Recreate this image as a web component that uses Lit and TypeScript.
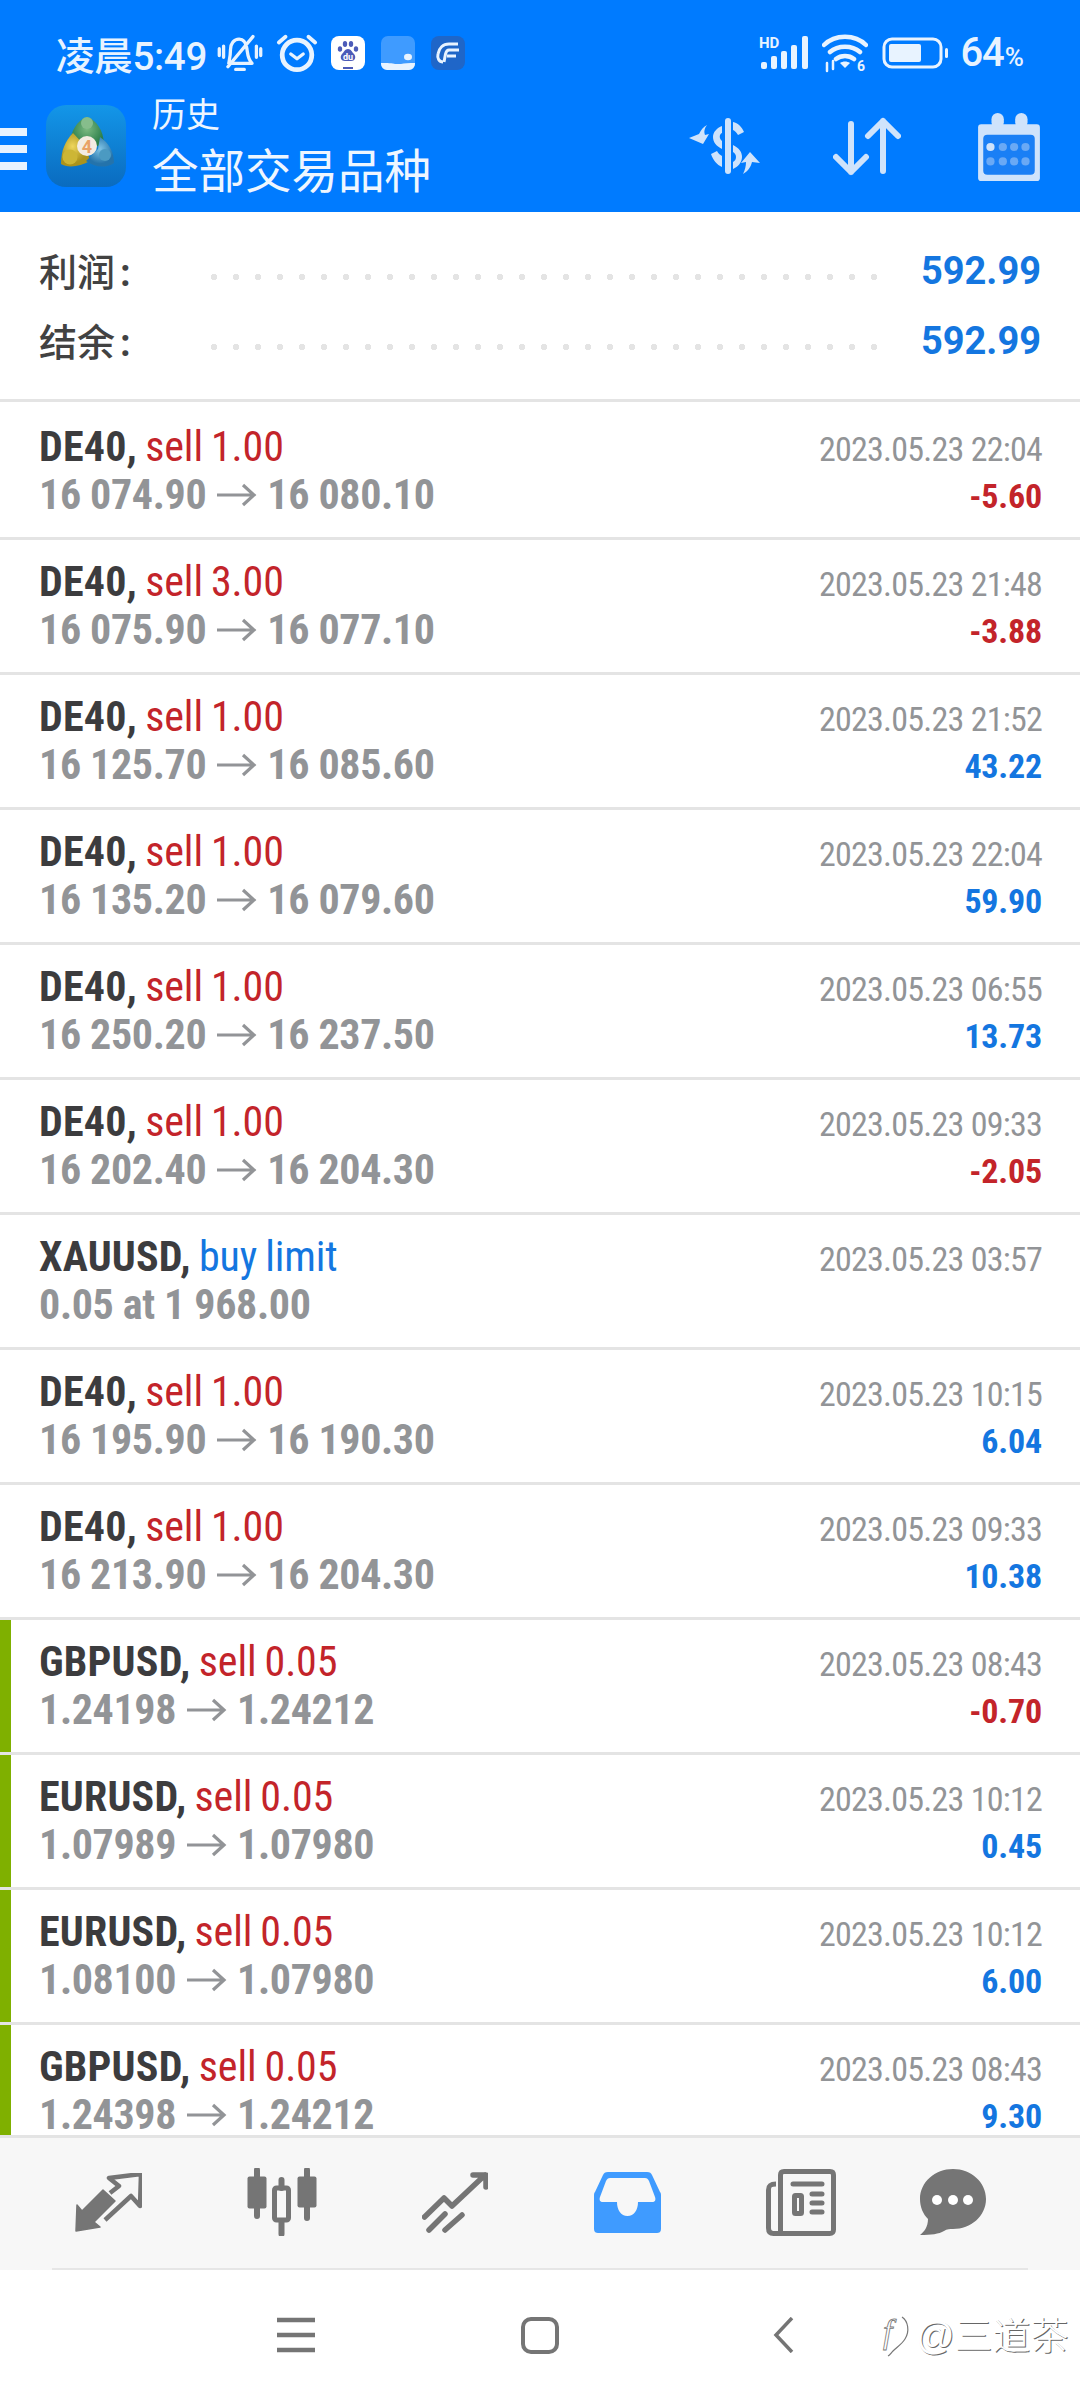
import { LitElement, css, html, svg } from 'lit'
import { customElement } from 'lit/decorators.js'

type Deal = {
  sym: string
  act: string
  buy?: boolean
  line: string
  arrow?: string
  time: string
  pl?: string
  mark?: boolean
}

const deals: Deal[] = [
  { sym: 'DE40', act: 'sell 1.00', line: '16 074.90', arrow: '16 080.10', time: '2023.05.23 22:04', pl: '-5.60' },
  { sym: 'DE40', act: 'sell 3.00', line: '16 075.90', arrow: '16 077.10', time: '2023.05.23 21:48', pl: '-3.88' },
  { sym: 'DE40', act: 'sell 1.00', line: '16 125.70', arrow: '16 085.60', time: '2023.05.23 21:52', pl: '43.22' },
  { sym: 'DE40', act: 'sell 1.00', line: '16 135.20', arrow: '16 079.60', time: '2023.05.23 22:04', pl: '59.90' },
  { sym: 'DE40', act: 'sell 1.00', line: '16 250.20', arrow: '16 237.50', time: '2023.05.23 06:55', pl: '13.73' },
  { sym: 'DE40', act: 'sell 1.00', line: '16 202.40', arrow: '16 204.30', time: '2023.05.23 09:33', pl: '-2.05' },
  { sym: 'XAUUSD', act: 'buy limit', buy: true, line: '0.05 at 1 968.00', time: '2023.05.23 03:57' },
  { sym: 'DE40', act: 'sell 1.00', line: '16 195.90', arrow: '16 190.30', time: '2023.05.23 10:15', pl: '6.04' },
  { sym: 'DE40', act: 'sell 1.00', line: '16 213.90', arrow: '16 204.30', time: '2023.05.23 09:33', pl: '10.38' },
  { sym: 'GBPUSD', act: 'sell 0.05', line: '1.24198', arrow: '1.24212', time: '2023.05.23 08:43', pl: '-0.70', mark: true },
  { sym: 'EURUSD', act: 'sell 0.05', line: '1.07989', arrow: '1.07980', time: '2023.05.23 10:12', pl: '0.45', mark: true },
  { sym: 'EURUSD', act: 'sell 0.05', line: '1.08100', arrow: '1.07980', time: '2023.05.23 10:12', pl: '6.00', mark: true },
  { sym: 'GBPUSD', act: 'sell 0.05', line: '1.24398', arrow: '1.24212', time: '2023.05.23 08:43', pl: '9.30', mark: true },
]

const arrowIcon = svg`<svg class="arr" width="41" height="24" viewBox="0 0 41 24" fill="none" stroke="#929497" stroke-width="3.2"><path d="M1 12H38M27 2l11 10-11 10"/></svg>`

@customElement('app-root')
export class AppRoot extends LitElement {
  static styles = css`
    :host {
      display: flex;
      flex-direction: column;
      width: 1080px;
      height: 2400px;
      background: #fff;
      position: relative;
      overflow: hidden;
      font-family: Roboto, "Noto Sans CJK SC", sans-serif;
    }
    svg { display: block; flex: none; }

    .head { height: 212px; background: #007bff; color: #e8f3ff; flex: none; }
    .status { height: 92px; display: flex; align-items: center; padding: 13px 0 0 56px; box-sizing: border-box; }
    .clock { font-size: 38.5px; font-weight: 500; width: 161px; white-space: nowrap; letter-spacing: -0.3px; }
    .st-icons { display: flex; align-items: center; }
    .st-icons .alarm { margin-left: 13px; }
    .st-icons .app { margin-left: 16px; }
    .st-icons .alarm + .app { margin-left: 13px; }
    .st-right { margin-left: auto; display: flex; align-items: center; padding-right: 56px; }
    .st-right .sig { margin-top: -3px; }
    .st-right .wifi { margin-left: 13px; margin-top: 4px; }
    .st-right .batt { margin-left: 14px; }
    .batt-txt { font-size: 40px; font-weight: 500; margin-left: 12px; letter-spacing: -1px; }
    .batt-txt small { font-size: 26px; font-weight: 500; letter-spacing: 0; margin-left: 1px; }

    .bar { height: 120px; display: flex; align-items: center; }
    .burger { width: 27px; margin-right: 19px; display: flex; flex-direction: column; gap: 9px; margin-top: -6px; }
    .burger i { display: block; height: 8px; background: #e8f3ff; }
    .logo { margin-top: -12px; }
    .titles { margin-left: 26px; margin-top: -10px; color: #eef6ff; }
    .t1 { font-size: 34px; line-height: 42px; }
    .t2 { font-size: 46.5px; line-height: 56px; margin-top: 8px; }
    .actions { margin-left: auto; display: flex; align-items: center; padding-right: 39px; margin-top: -10px; }
    .actions .arrows { margin-left: 72px; }
    .actions .cal { margin-left: 76px; }

    .summary { height: 187px; flex: none; box-sizing: border-box; padding-top: 22px; }
    .sum-row { height: 70px; display: flex; align-items: center; padding: 0 39px; }
    .sum-label { width: 172px; font-size: 38px; color: #424242; white-space: nowrap; font-weight: 500; }
    .colon { margin-left: 5px; font-weight: 700; }
    .dots { flex: 1; height: 6px; margin-top: 16px; background: radial-gradient(circle at 3px 3px, #e4e4e4 3px, transparent 3.4px) 0 0 / 22px 6px repeat-x; margin-right: 40px; }
    .sum-val { font-size: 38px; font-weight: 700; color: #1476e0; margin-top: 4px; }

    .list { flex: 1; min-height: 0; overflow: hidden; border-top: 3px solid #e4e4e4; padding-top: 3px; }
    .row { height: 132px; border-bottom: 3px solid #e4e4e4; position: relative; display: flex; justify-content: space-between; padding: 0 38px 0 39px; }
    .row.mark::before { content: ''; position: absolute; left: 0; top: 0; bottom: 0; width: 11px; background: #7fb000; }
    .left, .right { display: flex; flex-direction: column; padding-top: 18px; white-space: nowrap; font-stretch: 75%; }
    .l1 { font-size: 42px; line-height: 48px; color: #c3242a; word-spacing: -1.5px; }
    .l1 b { color: #3c3c3e; font-weight: 700; letter-spacing: 0.2px; }
    .l1 span { letter-spacing: -0.1px; }
    .l1 .buy { color: #1476e0; }
    .l2 { font-size: 42px; line-height: 45px; margin-top: 1px; color: #929497; font-weight: 700; display: flex; align-items: center; gap: 10px; letter-spacing: -0.35px; }
    .right { align-items: flex-end; padding-top: 21px; }
    .time { font-size: 34px; line-height: 47px; color: #929497; letter-spacing: -0.75px; }
    .pl { font-size: 34px; line-height: 41px; margin-top: 3px; font-weight: 700; color: #1476e0; letter-spacing: -0.2px; }
    .pl.neg { color: #c3242a; }

    .tabs { height: 135px; flex: none; background: #f7f7f7; position: relative; display: grid; grid-template-columns: repeat(5, 173px) 132px; padding-left: 22px; border-top: 3px solid #e4e4e4; box-sizing: border-box; }
    .tabs::after { content: ''; position: absolute; left: 52px; right: 52px; bottom: 0; height: 2px; background: #e6e6e6; }
    .tab { display: flex; align-items: center; justify-content: center; margin-top: -4px; }

    .nav { height: 130px; flex: none; background: #fff; position: relative; display: flex; padding: 47px 0 0 277px; box-sizing: border-box; align-items: flex-start; }
    .nav .home { margin-left: 206px; }
    .nav .back { margin-left: 214px; }
    .wm { position: absolute; left: 878px; top: 43px; display: flex; align-items: center; gap: 5px; }
    .wm span { font-size: 38px; line-height: 46px; color: #fff; text-shadow: 1px 1px 0 #666; white-space: nowrap; font-family: "Liberation Sans", "Noto Sans CJK SC", sans-serif; font-weight: 300; }
  `

  private bell() {
    return html`<svg width="46" height="38" viewBox="0 0 52 44" fill="none" stroke="#e8f3ff" stroke-width="3.8" stroke-linecap="round" stroke-linejoin="round">
      <path d="M13 34h27c-5-5-5-10-6-17-1-7-4-11-9-11-6 0-10 5-10 12 0 7-1 11-2 16zM21 41h10M41 3 12 38M2 17v8M7 14v13M45 14v13M50 17v8"/>
    </svg>`
  }

  private alarm() {
    return html`<svg class="alarm" width="42" height="42" viewBox="0 0 44 44" fill="none" stroke="#e8f3ff" stroke-linecap="round" stroke-linejoin="round">
      <circle cx="22" cy="24" r="15.5" stroke-width="5"/>
      <path d="M15.5 23l6.5 5 6.5-5" stroke-width="3.5"/>
      <path d="M3 11l7-6M41 11l-7-6" stroke-width="4"/>
    </svg>`
  }

  private baidu() {
    return html`<svg class="app" width="34" height="34" viewBox="0 0 34 34">
      <rect width="34" height="34" rx="8" fill="#fff"/>
      <g fill="#4c5bb8"><ellipse cx="9" cy="13" rx="2.2" ry="2.8"/><ellipse cx="14" cy="8" rx="2.2" ry="3"/><ellipse cx="20" cy="8" rx="2.2" ry="3"/><ellipse cx="25" cy="13" rx="2.2" ry="2.8"/>
      <path d="M17 13c3 0 4 3 6 5s2 7-3 7H14c-5 0-5-5-3-7s3-5 6-5z"/><rect x="12" y="31" width="10" height="2"/></g>
      <text x="17" y="24" text-anchor="middle" font-family="Roboto" font-size="9" font-weight="700" fill="#fff">du</text>
    </svg>`
  }

  private chatApp() {
    return html`<svg class="app" width="34" height="34" viewBox="0 0 34 34">
      <rect width="34" height="34" rx="7" fill="#3f9bff"/>
      <path d="M0 27c6 0 12 0 14 1h6c3-1 8-1 14-1v1a6 6 0 0 1-6 6H6a6 6 0 0 1-6-6z" fill="#e8f3ff"/>
      <ellipse cx="27" cy="21" rx="4" ry="3.2" fill="#e8f3ff"/>
    </svg>`
  }

  private flyApp() {
    return html`<svg class="app" width="34" height="34" viewBox="0 0 34 34" fill="none">
      <rect width="34" height="34" rx="8" fill="#1f66c8"/>
      <path d="M27 8H18C12 8 8 12 7 18c-1 4 1 8 5 8" stroke="#e8f3ff" stroke-width="3"/>
      <path d="M28 14H18c-2 0-3 2-3.500 4L13 26M25 20h-9" stroke="#e8f3ff" stroke-width="3"/>
    </svg>`
  }

  private signal() {
    return html`<svg class="sig" width="50" height="37" viewBox="0 -3 50 37">
      <text x="0" y="12" font-family="Roboto" font-size="15" font-weight="700" fill="#e8f3ff">HD</text>
      <g fill="#e8f3ff"><rect x="2" y="26" width="6" height="7" rx="2"/><rect x="12" y="20" width="6" height="13" rx="2"/><rect x="22" y="15" width="6" height="18" rx="2"/><rect x="32" y="9" width="6" height="24" rx="2"/><rect x="43" y="0" width="6" height="33" rx="2"/></g>
    </svg>`
  }

  private wifi() {
    return html`<svg class="wifi" width="46" height="42" viewBox="0 0 46 42" fill="none" stroke="#e8f3ff" stroke-width="4.500" stroke-linecap="round">
      <path d="M2 11C13 0 33 0 44 11M8 18c8-7 22-7 30 0M14 25c5-4 13-4 18 0"/>
      <path d="M23 34l-5-5c3-2 7-2 10 0z" fill="#e8f3ff" stroke="none"/>
      <path d="M5 29v8M11 27v8" stroke-width="2.500"/>
      <text x="35" y="37" font-family="Roboto" font-size="14" font-weight="700" fill="#e8f3ff" stroke="none">6</text>
    </svg>`
  }

  private battery() {
    return html`<svg class="batt" width="66" height="32" viewBox="0 0 66 32" fill="none">
      <rect x="2" y="2" width="57" height="28" rx="8" stroke="#e8f3ff" stroke-width="3"/>
      <rect x="7" y="7" width="32" height="18" rx="2" fill="#e8f3ff"/>
      <rect x="63" y="11" width="3" height="10" rx="1.500" fill="#e8f3ff"/>
    </svg>`
  }

  private logo() {
    return html`<svg class="logo" width="80" height="82" viewBox="0 0 80 82">
      <defs>
        <linearGradient id="lg" x1="0" y1="0" x2="0" y2="1"><stop offset="0" stop-color="#1396e8"/><stop offset="1" stop-color="#0a6bbf"/></linearGradient>
        <radialGradient id="gr" cx=".5" cy=".35"><stop offset="0" stop-color="#7cba82"/><stop offset="1" stop-color="#2c7f4b"/></radialGradient>
        <radialGradient id="ye" cx=".4" cy=".4"><stop offset="0" stop-color="#eed65c"/><stop offset="1" stop-color="#ab931c"/></radialGradient>
        <radialGradient id="bl" cx=".5" cy=".4"><stop offset="0" stop-color="#7fc3e4"/><stop offset="1" stop-color="#2473ab"/></radialGradient>
      </defs>
      <rect width="80" height="82" rx="20" fill="url(#lg)"/>
      <path d="M41 12C51 15 57 26 58 38L41 46 24 38C25 26 31 15 41 12Z" fill="url(#gr)"/>
      <circle cx="41" cy="18" r="6" fill="#86bd8c"/>
      <path d="M27 28C19 36 15 46 15 59 21 63 34 62 44 56L40 42Z" fill="url(#ye)"/>
      <circle cx="24" cy="52" r="7.500" fill="#cdb635"/>
      <path d="M54 32C63 38 68 47 68 58 59 64 48 62 40 56L52 44Z" fill="url(#bl)"/>
      <circle cx="59" cy="50" r="6" fill="#4b9ac2"/>
      <circle cx="41" cy="41" r="10" fill="#f3ece2"/>
      <text x="41" y="47.500" text-anchor="middle" font-family="Roboto" font-size="18" font-weight="700" fill="#e9a267">4</text>
    </svg>`
  }

  private dollar() {
    return html`<svg width="72" height="58" viewBox="0 0 72 58" fill="#cfe3fb">
      <rect x="36" y="0" width="6" height="56" rx="3"/>
      <path d="M44 4c5 1 9 5 11 10l-6 3c-2-3-3-4-5-5zM33 8v7c-3 1-3 6 0 8v8c-6-3-9-7-9-12 0-5 4-9 9-11zM44 27c6 3 9 7 9 12s-4 10-9 12v-7c2-1 3-3 3-5s-1-4-3-5zM22 36l6-3c1 2 3 4 5 5v11c-5-2-9-7-11-13z"/>
      <path d="M0 20l10-4c2-4 4-7 8-9-3 4-3 7-2 10l4-1-6 10z"/>
      <path d="M71 45l-8-1c-1 5-5 10-9 12 2-4 3-8 3-12l-5 1 9-11z"/>
    </svg>`
  }

  private updown() {
    return html`<svg class="arrows" width="68" height="60" viewBox="0 0 68 60" fill="none" stroke="#cfe3fb" stroke-width="6" stroke-linecap="round" stroke-linejoin="round">
      <path d="M18 7v48M3 40l15 15 15-15M50 54V4M35 19 50 4l15 15"/>
    </svg>`
  }

  private calendar() {
    return html`<svg class="cal" width="64" height="68" viewBox="0 0 62 66">
      <path d="M4 11h54a3 3 0 0 1 3 3v49a3 3 0 0 1-3 3H4a3 3 0 0 1-3-3V14a3 3 0 0 1 3-3z" fill="#cfe3fb"/>
      <rect x="6" y="21" width="50" height="39" rx="4" fill="#1a7ff5"/>
      <rect x="14" y="0" width="12" height="15" rx="6" fill="#cfe3fb"/>
      <rect x="37" y="0" width="12" height="15" rx="6" fill="#cfe3fb"/>
      <g fill="#6aa9f5">
        <circle cx="13" cy="33" r="4" fill="#cfe3fb"/><circle cx="25" cy="33" r="4"/><circle cx="36" cy="33" r="4"/><circle cx="47" cy="33" r="4"/>
        <circle cx="13" cy="47" r="4"/><circle cx="25" cy="47" r="4"/><circle cx="36" cy="47" r="4"/><circle cx="47" cy="47" r="4"/>
      </g>
    </svg>`
  }

  private tabIcons() {
    const g = '#757575'
    return [
      html`<svg width="67" height="59" viewBox="0 0 67 59" fill="none" stroke="${g}">
        <path d="M1 58 2 32l5 6L28 17 40 28 19 49l6 5Z" fill="${g}" stroke-width="1.500" stroke-linejoin="round"/>
        <path d="M35 20l9-7-10-8 32-4-1 32-9-10L30 47" stroke-width="4.500" stroke-linejoin="round"/>
      </svg>`,
      html`<svg width="70" height="68" viewBox="0 0 70 68" fill="${g}" stroke="${g}">
        <rect x="0.500" y="8.500" width="19" height="32" rx="2" stroke="none"/><path d="M10 2v46M60 2v48" stroke-width="6" stroke-linecap="round"/>
        <rect x="50.500" y="8.500" width="19" height="31" rx="2" stroke="none"/>
        <rect x="27.500" y="20" width="14" height="32" fill="none" stroke-width="5" rx="2"/><path d="M34.500 12v8M34.500 53v13" stroke-width="6" stroke-linecap="round"/>
      </svg>`,
      html`<svg width="66" height="61" viewBox="0 0 66 61" fill="none" stroke="${g}" stroke-width="5.500" stroke-linecap="round" stroke-linejoin="round">
        <path d="M2.500 45 22 26l8 8L63 3M51 3h13v12M23 42 7 58M40 43 23 58"/>
      </svg>`,
      html`<svg width="67" height="61" viewBox="0 0 67 61">
        <path d="M14 0h39c3 0 4 1 5 3l8 17c1 1 1 2 1 4v33c0 3-2 4-4 4H4c-2 0-4-1-4-4V24c0-2 0-3 1-4L9 3c1-2 2-3 5-3z" fill="#3f9bff"/>
        <path d="M16 6h35c2 0 3 1 4 3l6 16c1 3 0 5-3 5H44c0 8-4 14-10.500 14S23 38 23 30H9c-3 0-4-2-3-5l6-16c1-2 2-3 4-3z" fill="#f7f7f7"/>
      </svg>`,
      html`<svg width="70" height="67" viewBox="0 0 70 67" fill="none" stroke="${g}">
        <path d="M10 15C4 15 2.500 17 2.500 21v38c0 4 2 5.500 5 5.500h56c3 0 4-1 4-4V6c0-2.500-1-3.500-3.500-3.500H18c-2.500 0-3.500 1-3.500 3.500v58" stroke-width="5"/>
        <path d="M27 15h29M46 25h10M46 34h10M46 43h10" stroke-width="5" stroke-linecap="round"/>
        <rect x="28.500" y="26.500" width="7" height="18" stroke-width="5" rx="1"/>
      </svg>`,
      html`<svg width="66" height="66" viewBox="0 0 66 66">
        <path d="M33 0c18 0 33 13 33 30S51 60 33 60c-3 0-6 0-9 2-5 3-13 4-24 4 4-3 8-8 8-16C3 45 0 38 0 30 0 13 15 0 33 0z" fill="${g}"/>
        <circle cx="17" cy="31" r="5" fill="#fff"/><circle cx="33" cy="31" r="5" fill="#fff"/><circle cx="48" cy="31" r="5" fill="#fff"/>
      </svg>`,
    ]
  }

  render() {
    return html`
      <div class="head">
        <div class="status">
          <span class="clock">凌晨5:49</span>
          <div class="st-icons">
            ${this.bell()}${this.alarm()}${this.baidu()}${this.chatApp()}${this.flyApp()}
          </div>
          <div class="st-right">
            ${this.signal()}${this.wifi()}${this.battery()}
            <span class="batt-txt">64<small>%</small></span>
          </div>
        </div>
        <div class="bar">
          <div class="burger"><i></i><i></i><i></i></div>
          ${this.logo()}
          <div class="titles">
            <div class="t1">历史</div>
            <div class="t2">全部交易品种</div>
          </div>
          <div class="actions">
            ${this.dollar()}${this.updown()}${this.calendar()}
          </div>
        </div>
      </div>

      <div class="summary">
        <div class="sum-row"><span class="sum-label">利润<span class="colon">:</span></span><span class="dots"></span><span class="sum-val">592.99</span></div>
        <div class="sum-row"><span class="sum-label">结余<span class="colon">:</span></span><span class="dots"></span><span class="sum-val">592.99</span></div>
      </div>

      <div class="list">
        ${deals.map(
          (d) => html`
            <div class="row ${d.mark ? 'mark' : ''}">
              <div class="left">
                <div class="l1"><b>${d.sym},</b> <span class="${d.buy ? 'buy' : ''}">${d.act}</span></div>
                <div class="l2">
                  <span>${d.line}</span>
                  ${d.arrow ? html`${arrowIcon}<span>${d.arrow}</span>` : ''}
                </div>
              </div>
              <div class="right">
                <div class="time">${d.time}</div>
                ${d.pl ? html`<div class="pl ${d.pl.startsWith('-') ? 'neg' : ''}">${d.pl}</div>` : ''}
              </div>
            </div>
          `,
        )}
      </div>

      <div class="tabs">
        ${this.tabIcons().map((icon) => html`<div class="tab">${icon}</div>`)}
      </div>

      <div class="nav">
        <svg width="38" height="36" viewBox="0 0 38 36" fill="none" stroke="#757575" stroke-width="4.500"><path d="M0 3h38M0 18h38M0 33h38"/></svg>
        <svg class="home" width="38" height="37" viewBox="0 0 38 37" fill="none" stroke="#757575" stroke-width="4"><rect x="2" y="2" width="34" height="33" rx="8"/></svg>
        <svg class="back" width="21" height="36" viewBox="0 0 21 36" fill="none" stroke="#757575" stroke-width="3.500"><path d="M19 1 3 18l16 17"/></svg>
        <div class="wm">
          <svg width="33" height="42" viewBox="0 0 33 42" fill="none" stroke="#777" stroke-width="1.200">
            <path d="M24 2c6 4 8 14 3 22-3 5-8 8-12 12-2 2-3 4-5 5"/>
            <text x="5" y="28" font-family="Liberation Serif" font-style="italic" font-size="34" fill="#fff" stroke-width="0.800">f</text>
          </svg>
          <span>@三道茶</span>
        </div>
      </div>
    `
  }
}

declare global {
  interface HTMLElementTagNameMap {
    'app-root': AppRoot
  }
}
